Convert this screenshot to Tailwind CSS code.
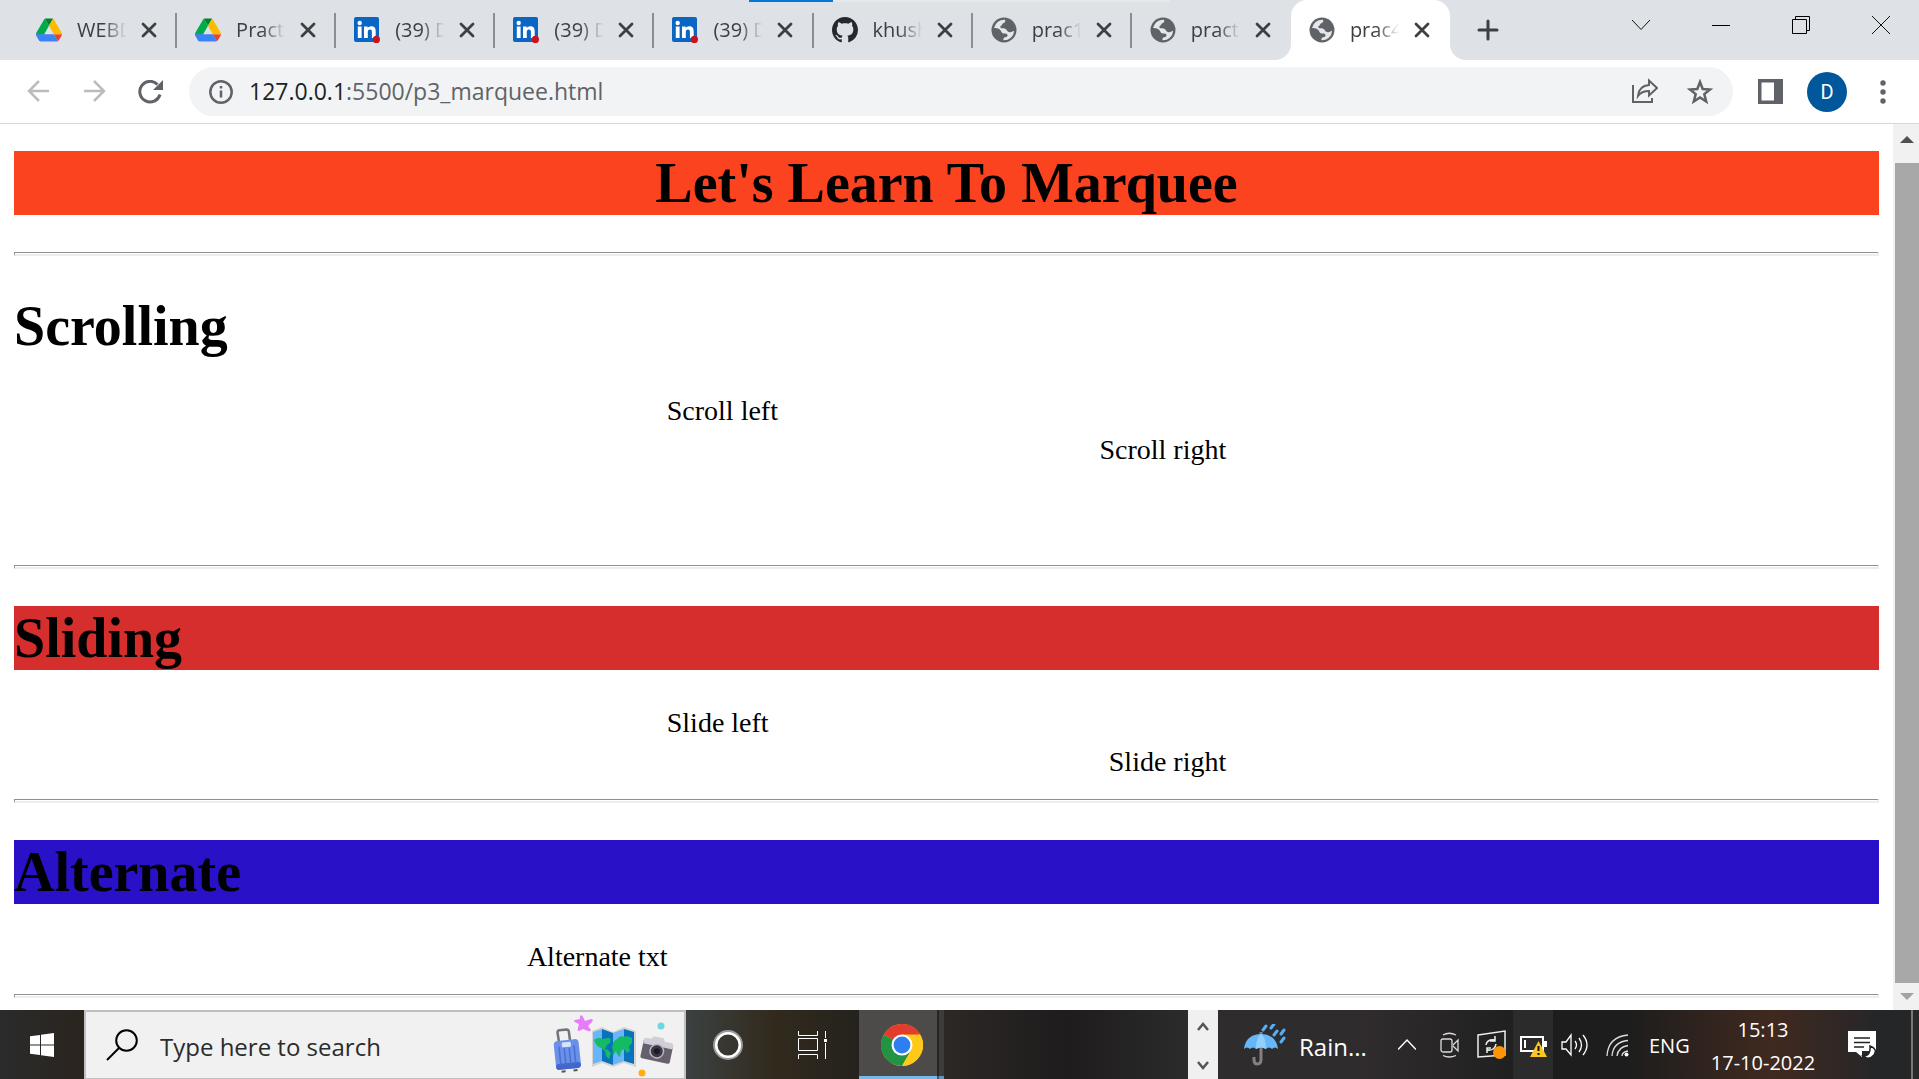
<!DOCTYPE html>
<html lang="en">
<head>
<meta charset="utf-8">
<meta name="viewport" content="width=device-width, initial-scale=1">
<title>prac4</title>
<script src="https://cdn.jsdelivr.net/npm/@tailwindcss/browser@4"></script>
</head>
<body class="flex h-screen flex-col overflow-hidden bg-white font-['Open_Sans',sans-serif] text-[#3c4043]">

<!-- shared symbols -->
<svg class="hidden" aria-hidden="true">
  <symbol id="drive" viewBox="0 0 87.3 78">
    <path fill="#0066da" d="m6.6 66.85 3.85 6.65c.8 1.4 1.95 2.5 3.3 3.3l13.75-23.8h-27.5c0 1.55.4 3.1 1.2 4.5z"/>
    <path fill="#00ac47" d="m43.65 25-13.75-23.8c-1.35.8-2.5 1.9-3.3 3.3l-25.4 44a9.06 9.06 0 0 0-1.2 4.5h27.5z"/>
    <path fill="#ea4335" d="m73.55 76.8c1.35-.8 2.5-1.9 3.3-3.3l1.6-2.75 7.65-13.25c.8-1.4 1.2-2.95 1.2-4.5h-27.5l5.85 11.5z"/>
    <path fill="#00832d" d="m43.65 25 13.75-23.8c-1.35-.8-2.9-1.2-4.5-1.2h-18.5c-1.6 0-3.15.45-4.5 1.2z"/>
    <path fill="#3c83f5" d="m59.8 53h-59.8c0 1.55.4 3.1 1.2 4.5l9.25 16c.8 1.4 1.95 2.5 3.3 3.3 1.35.8 2.9 1.2 4.5 1.2h50.8c1.6 0 3.15-.45 4.5-1.2z"/>
    <path fill="#ffba00" d="m73.4 26.5-12.7-22c-.8-1.4-1.95-2.5-3.3-3.3l-13.75 23.8 16.15 28h27.45c0-1.55-.4-3.1-1.2-4.5z"/>
  </symbol>
  <symbol id="linkedin" viewBox="0 0 26 26">
    <rect width="25" height="25" rx="2" fill="#0a66c2"/>
    <circle cx="5.7" cy="6" r="2.2" fill="#fff"/>
    <path fill="#fff" d="M3.8 9.5h3.8V21H3.8zM10 9.500h3.600v1.600c.7-1.200 2-1.900 3.800-1.900 3.400 0 4.300 2.200 4.300 5.300V21h-3.800v-5.700c0-1.600-.2-2.900-1.900-2.900s-2.200 1.300-2.200 2.900V21H10z"/>
    <circle cx="22.400" cy="22.400" r="3.600" fill="#c9141d"/>
  </symbol>
  <symbol id="github" viewBox="0 0 16 16">
    <path fill="#24292f" d="M8 0C3.580 0 0 3.580 0 8c0 3.540 2.290 6.530 5.470 7.590.4.070.55-.17.55-.38 0-.19-.01-.82-.01-1.490-2.010.37-2.530-.49-2.690-.94-.09-.23-.48-.94-.82-1.130-.28-.15-.68-.52-.01-.53.63-.01 1.080.58 1.230.82.72 1.210 1.870.87 2.330.66.07-.52.28-.87.51-1.070-1.780-.2-3.640-.89-3.640-3.950 0-.87.31-1.590.82-2.150-.08-.2-.36-1.020.08-2.120 0 0 .67-.21 2.200.82.64-.18 1.320-.27 2-.27s1.360.09 2 .27c1.530-1.040 2.200-.82 2.200-.82.44 1.100.16 1.920.08 2.120.51.56.82 1.270.82 2.150 0 3.070-1.870 3.750-3.650 3.950.29.25.54.73.54 1.480 0 1.070-.01 1.930-.01 2.200 0 .21.15.46.55.38A8.010 8.010 0 0 0 16 8c0-4.420-3.580-8-8-8z"/>
  </symbol>
  <symbol id="globe" viewBox="0 0 26 26">
    <circle cx="13" cy="13" r="12.500" fill="#5f6368"/>
    <path fill="#e4e6ea" d="M3 11A10.300 10.300 0 0 1 14 2.800c.6 1.700.2 2.700-1.200 3.200-2 .7-1.200 2-2.600 2.800-1.600.8-.8 2.400.8 2.500 2.600.1 4.200.3 4.800 2 .5 1.600 2.500 2.200 4.400 1.600l3-1.200A10.300 10.300 0 0 1 12.500 23.300c-.4-1.700.2-3 1.800-3.100 2-.2 2.600-1.400 2-2.800-.5-1.200-1.800-1-3.300-1-2.300 0-2.400-1.800-3.300-3-1.200-1.600-3.400-2.700-6.700-2.400z"/>
  </symbol>
  <symbol id="close" viewBox="0 0 16 16">
    <path d="M2 2l12 12M14 2L2 14" stroke="#3c4043" stroke-width="2.800" stroke-linecap="round"/>
  </symbol>
</svg>

<header>
  <div class="relative flex h-[60px] items-stretch bg-[#dee1e6] pl-[18px]">
    <span class="absolute left-[749px] top-0 h-[2px] w-[84px] bg-[#0078d7]"></span>
    <span class="absolute left-[833px] top-0 h-[2px] w-[337px] bg-[#e8e8e8]"></span>
    <nav id="tabs" class="grid w-[1432px] shrink-0 grid-cols-9" aria-label="Tabs"></nav>
    <button class="ml-6 flex w-7 items-center justify-center" aria-label="New tab">
      <svg class="size-6" viewBox="0 0 24 24"><path d="M12 3v18M3 12h18" stroke="#3c4043" stroke-width="3" stroke-linecap="round"/></svg>
    </button>
    <div class="-mr-[2px] ml-auto flex h-[50px]">
      <button class="grid w-20 place-items-center" aria-label="Search tabs"><svg class="size-5" viewBox="0 0 20 20" fill="none" stroke="#111"><path d="M1 5l9 9.500L19 5"/></svg></button>
      <button class="grid w-20 place-items-center" aria-label="Minimize"><svg class="size-5" viewBox="0 0 20 20"><path d="M1 10.500h18" stroke="#000"/></svg></button>
      <button class="grid w-20 place-items-center" aria-label="Restore"><svg class="size-5" viewBox="0 0 20 20" fill="none" stroke="#000"><path d="M1.500 4.500h14v14h-14zM4.500 4.500v-3h14v14h-3"/></svg></button>
      <button class="grid w-20 place-items-center" aria-label="Close window"><svg class="size-5" viewBox="0 0 20 20"><path d="M1 1l18 18M19 1L1 19" stroke="#111"/></svg></button>
    </div>
  </div>

  <div class="flex h-16 items-center border-b border-[#d5d7da] bg-white pl-6">
    <button class="w-14" aria-label="Back"><svg class="h-6 w-7" viewBox="0 0 28 24" fill="none" stroke="#babcbe" stroke-width="2.500"><path d="M25 11H5M15 1L5 11l10 10"/></svg></button>
    <button class="w-14" aria-label="Forward"><svg class="h-6 w-7" viewBox="0 0 28 24" fill="none" stroke="#babcbe" stroke-width="2.500"><path d="M4 11h20M14 1l10 10-10 10"/></svg></button>
    <button class="w-[53px]" aria-label="Reload"><svg class="h-6 w-7" viewBox="0 0 28 24" fill="none" stroke="#5f6368" stroke-width="3"><path d="M24 14.500A10.300 10.300 0 1 1 21.500 4.500"/><path d="M27 0v10H17z" fill="#5f6368" stroke="none"/></svg></button>
    <div class="flex h-[49px] flex-1 items-center rounded-full bg-[#f1f3f4] px-5">
      <svg class="size-6 shrink-0" viewBox="0 0 24 24" fill="none" stroke="#5f6368" stroke-width="2.500"><circle cx="12" cy="12" r="10.700"/><path d="M12 10.500v7M12 6v2.600"/></svg>
      <div class="flex-1 pb-[2px] pl-4 text-[23px] leading-8 text-[#5f6368]"><span class="text-[#202124]">127.0.0.1</span>:5500/p3_marquee.html</div>
      <button class="mr-[29px]" aria-label="Share"><svg class="size-[27px]" viewBox="0 0 27 27" fill="none" stroke="#5f6368" stroke-width="2"><path d="M2 7v17h19v-4"/><path d="M7 18c.5-6.500 4.500-10.500 11-11V2.500l8 7.500-8 7.500V13c-5 0-8.500 1.500-11 5z"/></svg></button>
      <button aria-label="Bookmark"><svg class="size-[26px]" viewBox="0 0 26 26" fill="none" stroke="#5f6368" stroke-width="2.500"><path d="M13 3l2.700 7 7.300.5-5.700 4.600 1.900 7.400L13 18.400l-6.200 4.100 1.900-7.400L3 10.500l7.300-.5z"/></svg></button>
    </div>
    <button class="ml-[25px]" aria-label="Side panel"><svg class="size-[25px]" viewBox="0 0 25 25"><path d="M0 0h25v25H0zM3.500 3.500v18H16v-18z" fill="#5f6368" fill-rule="evenodd"/></svg></button>
    <button class="ml-6 grid size-[40px] place-items-center rounded-full bg-[#01579b] font-[Roboto] text-[20px] text-white" aria-label="Profile">D</button>
    <button class="mx-6 w-6" aria-label="Menu"><svg class="mx-auto h-6 w-2" viewBox="0 0 8 24" fill="#5f6368"><circle cx="4" cy="3" r="2.700"/><circle cx="4" cy="12" r="2.700"/><circle cx="4" cy="21" r="2.700"/></svg></button>
  </div>
</header>

<div class="flex min-h-0 flex-1">
  <main class="min-w-0 flex-1 overflow-hidden px-[14px] pt-[27px] font-['Liberation_Serif',serif] text-[28px] leading-8 text-black">
    <h1 class="bg-[#fc4320] text-center text-[56px] leading-16 font-bold">Let's Learn To Marquee</h1>
    <hr class="mt-[37px] mb-[38px] h-1 border-2 border-t border-l border-[#ededed] border-t-[#8f8f8f] border-l-[#8f8f8f]">
    <h1 class="text-[56px] leading-16 font-bold">Scrolling</h1>
    <div class="mx-auto mt-[37px] flex h-[170px] w-[30%] flex-col gap-[7px]">
      <p>Scroll left</p>
      <p class="text-right">Scroll right</p>
    </div>
    <hr class="mb-[37px] h-1 border-2 border-t border-l border-[#ededed] border-t-[#8f8f8f] border-l-[#8f8f8f]">
    <h1 class="bg-[#d62d2d] text-[56px] leading-16 font-bold">Sliding</h1>
    <div class="mx-auto mt-[37px] flex w-[30%] flex-col gap-[7px]">
      <p>Slide left</p>
      <p class="text-right">Slide right</p>
    </div>
    <hr class="mt-[21px] mb-[37px] h-1 border-2 border-t border-l border-[#ededed] border-t-[#8f8f8f] border-l-[#8f8f8f]">
    <h1 class="bg-[#2811c6] text-[56px] leading-16 font-bold">Alternate</h1>
    <div class="mx-auto mt-[37px] w-[45%]"><p>Alternate txt</p></div>
    <hr class="mt-[21px] h-1 border-2 border-t border-l border-[#ededed] border-t-[#8f8f8f] border-l-[#8f8f8f]">
  </main>
  <div class="flex w-[26px] flex-col bg-[#f1f1f1] pl-[2px]">
    <svg class="h-[39px] w-6" viewBox="0 0 24 39"><path d="M5 19l7-7 7 7z" fill="#505050"/></svg>
    <div class="flex-1 bg-[#a8a8a8]"></div>
    <svg class="h-[27px] w-6" viewBox="0 0 24 27"><path d="M5 10l7 7 7-7z" fill="#a3a3a3"/></svg>
  </div>
</div>

<footer class="flex h-[69px] shrink-0 items-stretch bg-[#242223] text-white">
  <button class="grid w-[84px] shrink-0 place-items-center bg-linear-to-r from-[#2b2b2b] to-[#2a241e]" aria-label="Start">
    <svg class="size-6" viewBox="0 0 24 24" fill="#fff"><path d="M0 3.300L10 2v9.500H0zM11 1.800L24 0v11.500H11zM0 12.500h10V22L0 20.700zM11 12.500h13V24l-13-1.800z"/></svg>
  </button>
  <div class="flex w-[602px] shrink-0 items-center border-2 border-b border-[#c0c0c0] bg-[#f1f1f1] pl-5">
    <svg class="size-8 shrink-0" viewBox="0 0 32 32" fill="none" stroke="#000" stroke-width="2"><circle cx="20.500" cy="11.500" r="10.300"/><path d="M13 19L1 31"/></svg>
    <input class="ml-[22px] w-[391px] bg-transparent pt-1 text-[24px] leading-8 text-[#2b2b2b] outline-none placeholder:text-[#2b2b2b] placeholder:opacity-100" type="text" placeholder="Type here to search" aria-label="Type here to search">
    <svg class="h-16 w-[124px] shrink-0" viewBox="0 0 124 64">
      <path d="M29 3q2-2 3 1l2 4 6-2q3 0 1 3l-4 4 3 4q0 2-3 1l-5-2-4 2q-2 0-1-3l1-4-4-2q-2-1 0-2l5-1z" fill="#e77bfa"/>
      <path d="M8 29l-1.500-9.500q0-2 2-2.200l7-.8q2 0 2.300 2L19 27" fill="none" stroke="#70757d" stroke-width="2.500"/>
      <g transform="rotate(-6 16 43)"><rect x="4" y="27" width="25" height="29" rx="4" fill="#6b90ea"/><rect x="4" y="50" width="25" height="6" rx="3" fill="#4267c8"/><path d="M9 33v19M14 35v18M19 35v18M24 33v19" stroke="#486fd2" stroke-width="1.500"/><rect x="12" y="29" width="9" height="5" rx="1" fill="#d8e4fb"/><path d="M9 57h4v2H9zM21 57h4v2h-4z" fill="#555"/></g>
      <path d="M41 18l10-4 11 5 11-5 12 4v36l-12-4-11 4-11-4-10 4z" fill="#d6d3d0"/>
      <path d="M42 19l9-3v32l-9 3zM62 20l11-4v32l-11 4z" fill="#67b5fa"/><path d="M51 16l11 4v32l-11-4zM73 16l10 3v32l-10-3z" fill="#0872bd"/>
      <path d="M43 27c4-3 7-2 9-1l5-1c3 0 3 2 2 5l-3 2-2 4 3 1 3 3-2 6-3-3-1-5-4-3c-3-1-6-4-7-8zM62 30c2-4 4-3 6-6 3-2 5 1 8-1l5 2v5l-3 3 1 5-3 2-3-4-3 2-1 6-3-3-1-3-3 5c-1-4 1-5-1-8z" fill="#14bb63"/>
      <circle cx="110" cy="13" r="3.500" fill="#6cd8e3"/><circle cx="91" cy="60" r="3.500" fill="#ffae12"/>
      <g transform="rotate(12 105 37)"><rect x="91" y="28" width="30" height="20" rx="2" fill="#66606c"/><path d="M91 33v-4q0-2 2-2h5l2-3h10l2 3h7q2 0 2 2v4z" fill="#d2cdd9"/><circle cx="106" cy="38" r="7.500" fill="#bcb6c3"/><circle cx="106" cy="38" r="6" fill="#3c3745"/><circle cx="106" cy="38" r="3" fill="#1c1924"/></g>
    </svg>
  </div>
  <div class="flex w-[173px] shrink-0 items-center bg-linear-to-r from-[#3b4242] via-[#322a1d] to-[#25221d] pl-[27px]">
    <button aria-label="Cortana"><svg class="size-[30px]" viewBox="0 0 30 30" fill="none"><circle cx="15" cy="15" r="13.500" stroke="#999" stroke-width="3"/><circle cx="15" cy="15" r="11.800" stroke="#fff" stroke-width="2.600"/></svg></button>
    <button class="ml-[55px]" aria-label="Task view"><svg class="h-7 w-[30px]" viewBox="0 0 30 28" fill="none" stroke="#fff"><path d="M.5 0v4.500h19V0M.5 7.500h19v12H.5zM.5 28v-4.500h19V28M27.500 0v7M27.500 12v16"/><path d="M26 8h3v3h-3z" fill="#fff" stroke="none"/></svg></button>
  </div>
  <button class="relative grid w-[85px] shrink-0 place-items-center bg-[#4d4b4a]" aria-label="Google Chrome">
    <svg class="size-[42px]" viewBox="0 0 48 48"><circle cx="24" cy="24" r="24" fill="#ffc919"/><path d="M24 24L3.200 12A24 24 0 0 1 44.800 12z" fill="#e33b2e"/><path d="M3.200 12A24 24 0 0 0 24 48l10.400-18L24 24z" fill="#229342"/><path d="M24 12h20.800A24 24 0 0 1 24 48l10.400-18z" fill="#ffc919"/><circle cx="24" cy="24" r="12" fill="#fff"/><circle cx="24" cy="24" r="9.600" fill="#2d7ef0"/></svg>
    <span class="absolute inset-x-0 bottom-0 h-[3px] bg-[#76b9ed]"></span>
    <span class="absolute inset-y-0 right-0 w-[7px] border-l-2 border-black/40 bg-black/20"></span>
  </button>
  <div class="flex-1 bg-linear-to-r from-[#2c2825] via-[#1e1c1d] to-[#2c2b2c]"></div>
  <div class="flex w-[30px] flex-col items-center justify-between bg-[#f0f0f0] pt-3 pb-[9px]">
    <button aria-label="Scroll up"><svg class="h-[9px] w-3" viewBox="0 0 12 9" fill="none" stroke="#555" stroke-width="2.500"><path d="M1 8l5-6 5 6"/></svg></button>
    <button aria-label="Scroll down"><svg class="h-[9px] w-3" viewBox="0 0 12 9" fill="none" stroke="#555" stroke-width="2.500"><path d="M1 1l5 6 5-6"/></svg></button>
  </div>
  <div class="flex w-[295px] items-center bg-linear-to-r from-[#2e2c2d] via-[#302c2d] to-[#202020] pl-[26px]">
    <svg class="size-[42px] shrink-0" viewBox="0 0 42 42"><path d="M17 8v27q0 5-3.500 5T10 36v-3" stroke="#85807e" stroke-width="3" fill="none"/><path d="M0 25C1 15 8 10 17 10s16 5 17 15q-3-3-6 0-3-3-6 0-5-3-10 0-3-3-6 0-3-3-6 0z" fill="#66b6f8"/><path d="M12 25c0-8 2-13 5-15 3 2 5 7 5 15q-5-3-10 0z" fill="#91cffd"/><path d="M19 6l3-4M27 4l3-4M30 11l3-4M37 10l3-4M37 18l3-4" stroke="#54aef5" stroke-width="3" stroke-linecap="round"/></svg>
    <span class="ml-[13px] w-[99px] pt-1 text-[24px] leading-8">Rain...</span>
    <button aria-label="Show hidden icons"><svg class="h-5 w-[18px]" viewBox="0 0 18 20" fill="none" stroke="#fff" stroke-width="1.500"><path d="M0 14.500L9 5l9 9.500"/></svg></button>
    <svg class="ml-6 h-[26px] w-5 shrink-0" viewBox="0 0 20 26" fill="none" stroke="#ddd" stroke-width="1.300"><rect x="1" y="7" width="11" height="13" rx="2"/><path d="M13 13l5-5v11l-5-5M3 3q6-3.500 13 0M3 23.500q6 3 13 0"/></svg>
    <svg class="ml-[17px] size-[30px] shrink-0" viewBox="0 0 30 30" fill="none" stroke="#eee" stroke-width="1.500"><path d="M1 5l27-4v24L1 27z"/><path d="M9 15q1-6 9-5M18 6v5h-5M19 14q-1 7-9 6M10 23v-5h4"/><circle cx="22.500" cy="22.500" r="6.500" fill="#ff9500" stroke="none"/></svg>
  </div>
  <div class="grid w-10 place-items-center bg-[#2b2b2b]">
    <svg class="h-6 w-[27px]" viewBox="0 0 27 24"><path d="M1 4h22v14H1z" fill="none" stroke="#fff" stroke-width="2"/><path d="M24 8h3v6h-3zM4 7h2v8H4z" fill="#fff"/><path d="M18.500 8L27 24H10z" fill="#fbc523"/><path d="M17.500 13h2v5h-2zM17.500 20h2v2h-2z" fill="#111"/></svg>
  </div>
  <div class="flex w-[366px] items-center bg-linear-to-r from-[#1d1d1d] from-20% via-[#40291f] via-60% to-[#242628] to-90% pl-2">
    <svg class="h-6 w-7 shrink-0" viewBox="0 0 28 24" fill="none" stroke="#fff" stroke-width="1.300"><path d="M1 9h4l5-7v20l-5-6H1zM14 8q3 4 0 8M18 5q5 7 0 14M22 2q8 10 0 20"/></svg>
    <svg class="ml-[17px] size-6 shrink-0" viewBox="0 0 24 24" fill="none" stroke="#ddd" stroke-width="1.300"><path d="M1 23Q2 4 22 2M6 23Q7 9 22 7.500M11 23Q12 14 22 12.500M16 23q0-4 6-5"/><circle cx="20.500" cy="21.500" r="2" fill="#fff" stroke="none"/></svg>
    <span class="ml-[19px] w-[53px] pt-[3px] text-[20px] leading-8">ENG</span>
    <time class="w-[122px] pt-[2px] text-center text-[20px] leading-[33px]" datetime="2022-10-17T15:13">15:13<br>17-10-2022</time>
    <button class="ml-6" aria-label="Notifications"><svg class="h-[30px] w-7" viewBox="0 0 28 30"><path d="M0 1h28v20H14v6l-6-5H0z" fill="#fff"/><path d="M6 8h16M6 12.500h16M6 17h10" stroke="#222" stroke-width="1.500"/><path d="M22 16q8 3 4 9-5 6-11 1 8 0 7-10z" fill="#fff" stroke="#222" stroke-width="1.500"/></svg></button>
    <div class="ml-auto h-full w-2 border-l-2 border-[#777] bg-[#292929]"></div>
  </div>
</footer>

<template id="tab">
  <div class="relative flex min-w-0 items-center pl-[18px]">
    <a href="#" class="flex items-center gap-[15px]">
      <span class="grid size-[26px] place-items-center"><svg class="size-[26px]"><use/></svg></span>
      <span class="label w-[52px] overflow-hidden mask-r-from-50% mask-r-to-95% whitespace-nowrap text-[20px] leading-7"></span>
    </a>
    <button class="ml-[12px]" aria-label="Close tab"><svg class="size-4"><use href="#close"/></svg></button>
    <span class="divider absolute right-0 top-[13px] h-[35px] w-[2px] bg-[#8b8e93]"></span>
  </div>
</template>
<template id="curves">
  <span class="absolute bottom-0 -left-4 size-4 bg-white"><span class="block size-4 rounded-br-2xl bg-[#dee1e6]"></span></span>
  <span class="absolute bottom-0 -right-4 size-4 bg-white"><span class="block size-4 rounded-bl-2xl bg-[#dee1e6]"></span></span>
</template>
<script>
  const tabs = [['drive', 'WEBD'], ['drive', 'Practi'], ['linkedin', '(39) D'], ['linkedin', '(39) D'], ['linkedin', '(39) D'], ['github', 'khush'], ['globe', 'prac1'], ['globe', 'practi'], ['globe', 'prac4']];
  const bar = document.getElementById('tabs');
  tabs.forEach(([icon, label], i) => {
    const tab = document.getElementById('tab').content.cloneNode(true).firstElementChild;
    tab.querySelector('use').setAttribute('href', '#' + icon);
    tab.querySelector('.label').textContent = label;
    if (i >= 7) tab.querySelector('.divider').remove();
    if (i === 8) {
      tab.classList.add('rounded-t-2xl', 'bg-white');
      tab.append(document.getElementById('curves').content.cloneNode(true));
    }
    bar.append(tab);
  });
</script>
</body>
</html>
